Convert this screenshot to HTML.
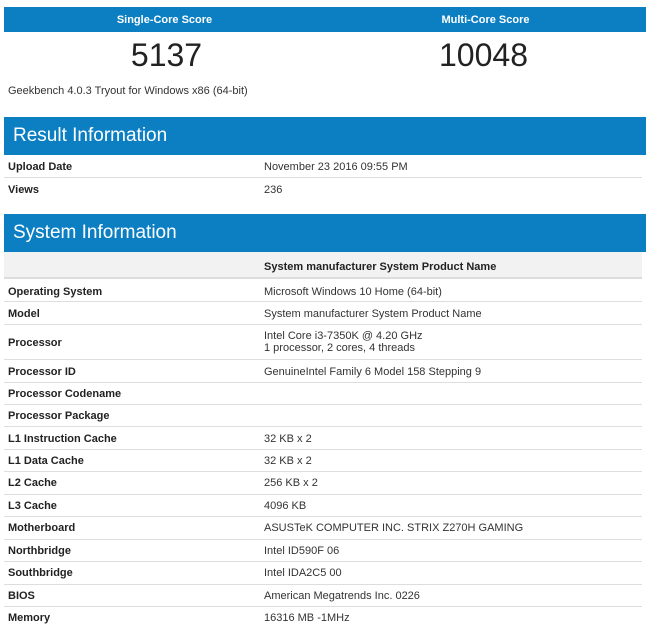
<!DOCTYPE html>
<html><head><style>
body{margin:0;background:#fff;font-family:"Liberation Sans",Arial,sans-serif;color:#222;width:650px;height:628px;overflow:hidden;position:relative}
.bar{position:absolute;left:4px;width:642px;background:#0b7fc2;color:#fff}
.sc{top:7px;height:25px;font-size:11px;font-weight:bold}
.sc span{position:absolute;top:7px;width:321px;text-align:center}
.num{position:absolute;top:37px;width:325px;text-align:center;font-size:32px;color:#222}
.h{font-size:19px;}
.h span{position:absolute;left:9px;top:8px}
.row{position:absolute;left:4px;width:638px;border-bottom:1px solid #ddd;font-size:11px}
.row b,.row i{position:absolute;font-style:normal;margin-top:1px}
.row b{left:4px}
.row i{left:260px;color:#333}
</style></head><body>
<div class="bar sc"><span style="left:0">Single-Core Score</span><span style="left:321px">Multi-Core Score</span></div>
<div class="num" style="left:4px">5137</div>
<div class="num" style="left:321px">10048</div>
<div style="position:absolute;left:8px;top:85px;font-size:11px;color:#333">Geekbench 4.0.3 Tryout for Windows x86 (64-bit)</div>
<div class="bar h" style="top:117px;height:38px"><span>Result Information</span></div>
<div class="row" style="top:155px;height:22px"><b style="top:5px">Upload Date</b><i style="top:5px">November 23 2016 09:55 PM</i></div>
<div class="row" style="top:178px;height:22px;border:none"><b style="top:5px">Views</b><i style="top:5px">236</i></div>
<div class="bar h" style="top:214px;height:38px"><span>System Information</span></div>
<div class="row" style="top:252px;height:25px;background:#f2f2f2;border-bottom:2px solid #ddd;width:638px"><b style="left:260px;top:8px">System manufacturer System Product Name</b></div>
<div class="row" style="top:279px;height:22px"><b style="top:6px">Operating System</b><i style="top:6px">Microsoft Windows 10 Home (64-bit)</i></div>
<div class="row" style="top:302px;height:22px"><b style="top:5px">Model</b><i style="top:5px">System manufacturer System Product Name</i></div>
<div class="row" style="top:325px;height:34px"><b style="top:11px">Processor</b><i style="top:4px;line-height:12px">Intel Core i3-7350K @ 4.20 GHz<br>1 processor, 2 cores, 4 threads</i></div>
<div class="row" style="top:360px;height:22px"><b style="top:5px">Processor ID</b><i style="top:5px">GenuineIntel Family 6 Model 158 Stepping 9</i></div>
<div class="row" style="top:383px;height:21px"><b style="top:4px">Processor Codename</b></div>
<div class="row" style="top:405px;height:21px"><b style="top:4px">Processor Package</b></div>
<div class="row" style="top:427px;height:22px"><b style="top:5px">L1 Instruction Cache</b><i style="top:5px">32 KB x 2</i></div>
<div class="row" style="top:450px;height:21px"><b style="top:4px">L1 Data Cache</b><i style="top:4px">32 KB x 2</i></div>
<div class="row" style="top:472px;height:22px"><b style="top:4px">L2 Cache</b><i style="top:4px">256 KB x 2</i></div>
<div class="row" style="top:495px;height:21px"><b style="top:4px">L3 Cache</b><i style="top:4px">4096 KB</i></div>
<div class="row" style="top:517px;height:22px"><b style="top:4px">Motherboard</b><i style="top:4px">ASUSTeK COMPUTER INC. STRIX Z270H GAMING</i></div>
<div class="row" style="top:540px;height:21px"><b style="top:4px">Northbridge</b><i style="top:4px">Intel ID590F 06</i></div>
<div class="row" style="top:562px;height:22px"><b style="top:4px">Southbridge</b><i style="top:4px">Intel IDA2C5 00</i></div>
<div class="row" style="top:585px;height:21px"><b style="top:4px">BIOS</b><i style="top:4px">American Megatrends Inc. 0226</i></div>
<div class="row" style="top:607px;height:21px;border:none"><b style="top:4px">Memory</b><i style="top:4px">16316 MB -1MHz</i></div>
</body></html>
